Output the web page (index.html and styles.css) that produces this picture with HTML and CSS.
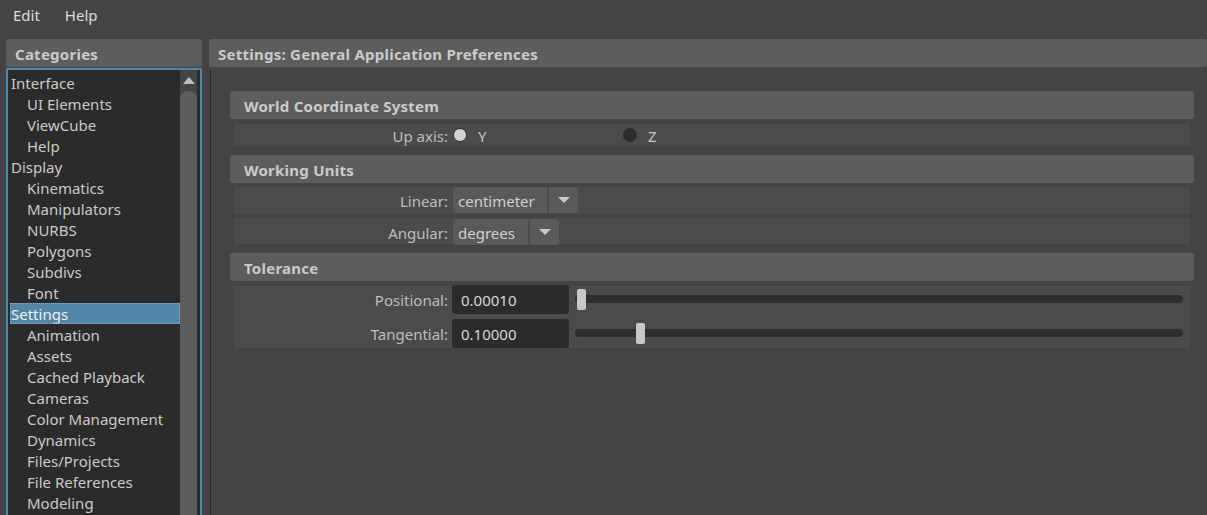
FILE: index.html
```html
<!DOCTYPE html>
<html>
<head>
<meta charset="utf-8">
<link rel="stylesheet" href="styles.css">
</head>
<body>
<div class="menubar"><span>Edit</span><span>Help</span></div>
<div class="main">
  <aside class="left">
    <div class="panel-title">Categories</div>
    <div class="listbox">
      <ul class="items">
        <li class="parent">Interface</li>
        <li>UI Elements</li>
        <li>ViewCube</li>
        <li>Help</li>
        <li class="parent">Display</li>
        <li>Kinematics</li>
        <li>Manipulators</li>
        <li>NURBS</li>
        <li>Polygons</li>
        <li>Subdivs</li>
        <li>Font</li>
        <li class="parent selected">Settings</li>
        <li>Animation</li>
        <li>Assets</li>
        <li>Cached Playback</li>
        <li>Cameras</li>
        <li>Color Management</li>
        <li>Dynamics</li>
        <li>Files/Projects</li>
        <li>File References</li>
        <li>Modeling</li>
      </ul>
      <div class="scrollbar"><div class="arrow"></div><div class="thumb"></div></div>
    </div>
  </aside>
  <section class="right">
    <div class="panel-title">Settings: General Application Preferences</div>
    <div class="content">
      <div class="group">
        <div class="group-title">World Coordinate System</div>
        <div class="block h22">
          <div class="row">
            <label>Up axis:</label>
            <div class="radios">
              <span class="opt"><span class="radio on"></span><span class="txt">Y</span></span>
              <span class="opt"><span class="radio"></span><span class="txt">Z</span></span>
            </div>
          </div>
        </div>
      </div>
      <div class="group">
        <div class="group-title">Working Units</div>
        <div class="block h27">
          <div class="row">
            <label>Linear:</label>
            <div class="dropdown w125"><span class="val">centimeter</span><span class="caret"></span></div>
          </div>
        </div>
        <div class="block h26">
          <div class="row">
            <label>Angular:</label>
            <div class="dropdown w106"><span class="val">degrees</span><span class="caret"></span></div>
          </div>
        </div>
      </div>
      <div class="group">
        <div class="group-title">Tolerance</div>
        <div class="block tol">
          <div class="row r29">
            <label>Positional:</label>
            <div class="field">0.00010</div>
            <div class="slider"><div class="track"></div><div class="handle" style="left:2px"></div></div>
          </div>
          <div class="row r30">
            <label>Tangential:</label>
            <div class="field">0.10000</div>
            <div class="slider"><div class="track"></div><div class="handle" style="left:61px"></div></div>
          </div>
        </div>
      </div>
    </div>
  </section>
</div>
</body>
</html>
```
FILE: styles.css
```css
* { box-sizing: border-box; }
html, body { margin: 0; padding: 0; }
body {
  background: #444444;
  color: #c8c8c8;
  font-family: "Noto Sans", "Open Sans", sans-serif;
  font-size: 15px;
  width: 1207px;
  height: 515px;
  overflow: hidden;
}
.menubar {
  height: 32px;
  display: flex;
  align-items: center;
  gap: 25px;
  padding: 0 13px 2px;
  color: #dcdcdc;
}
.main {
  margin-top: 7px;
  display: flex;
  height: 476px;
  padding-left: 6px;
  overflow: hidden;
}
.left {
  width: 196px;
  display: flex;
  flex-direction: column;
  gap: 1px;
  flex: none;
}
.panel-title {
  height: 28px;
  flex: none;
  background: #5d5d5d;
  border-radius: 2px;
  font-weight: 700;
  letter-spacing: 0.25px;
  color: #cacaca;
  padding: 2px 0 0 9px;
  display: flex;
  align-items: center;
}
.listbox {
  flex: 1;
  border: 2px solid #4f86ac;
  border-bottom: none;
  display: flex;
  background: #2b2b2b;
  min-height: 0;
}
.items {
  list-style: none;
  margin: 0;
  padding: 2px 0 0 2px;
  flex: 1;
  overflow: hidden;
}
.items li {
  height: 21px;
  line-height: 23px;
  padding-left: 17px;
  color: #cacaca;
  white-space: nowrap;
}
.items li.parent { padding-left: 1px; }
.items li.selected {
  background: #5285a6;
  color: #eeeeee;
  outline: 1px dotted #8fb0c6;
  outline-offset: -1px;
}
.scrollbar {
  width: 20px;
  flex: none;
  background: #444444;
  border-right: 3px solid #2b2b2b;
  display: flex;
  flex-direction: column;
  align-items: center;
}
.arrow {
  margin-top: 7px;
  width: 0; height: 0;
  border-left: 6.5px solid transparent;
  border-right: 6.5px solid transparent;
  border-bottom: 7px solid #bdbdbd;
}
.thumb {
  margin-top: 7px;
  flex: 1;
  width: 17px;
  background: #5d5d5d;
  border-radius: 8px 8px 0 0;
}
.right {
  flex: 1;
  margin-left: 7px;
  display: flex;
  flex-direction: column;
  min-width: 0;
}
.content {
  flex: 1;
  margin-top: 3px;
  margin-left: 1px;
  border-left: 1px solid #2b2b2b;
  padding: 21px 13px 0 19px;
  display: flex;
  flex-direction: column;
  gap: 9px;
}
.group { display: flex; flex-direction: column; gap: 4px; }
.group-title {
  height: 28px;
  background: #5d5d5d;
  border-radius: 2px;
  font-weight: 700;
  letter-spacing: 0.25px;
  color: #cacaca;
  padding: 2px 0 0 14px;
  display: flex;
  align-items: center;
}
.block {
  margin: 0 4px;
  background: #4b4b4b;
}
.group:first-child .block { margin-top: 1px; }
.h22 { height: 22px; }
.h27 { height: 27px; }
.h26 { height: 26px; }
.h27 .row { margin-top: -1px; }
.h26 .row { padding-top: 2px; }
.tol {
  height: 62px;
  display: flex;
  flex-direction: column;
  gap: 5px;
  margin-top: 1px;
}
.row {
  height: 100%;
  display: flex;
  align-items: center;
}
.r29 { height: 29px; margin-top: -1px; }
.r30 { height: 30px; }
.row label {
  width: 214px;
  flex: none;
  text-align: right;
  color: #bdbdbd;
  padding-top: 2px;
  margin-right: 5px;
}
.radios { display: flex; }
.opt {
  width: 170px;
  display: flex;
  align-items: center;
  color: #c8c8c8;
}
.opt .txt { padding-top: 2px; }
.radio {
  width: 14px;
  height: 14px;
  border-radius: 50%;
  background: #2b2b2b;
  border: 1px solid #2b2b2b;
  margin-right: 11px;
}
.radio.on { background: #d2d2d2; }
.dropdown {
  height: 26px;
  background: #5a5a5a;
  border-radius: 3px;
  display: flex;
  align-items: center;
  color: #d0d0d0;
}
.w125 { width: 125px; }
.w106 { width: 106px; }
.dropdown .val {
  flex: 1;
  padding: 2px 0 0 5px;
  height: 100%;
  display: flex;
  align-items: center;
  border-right: 2px solid #4b4b4b;
}
.dropdown .caret {
  width: 29px;
  display: flex;
  justify-content: center;
}
.dropdown .caret::before {
  content: "";
  width: 0; height: 0;
  border-left: 6.5px solid transparent;
  border-right: 6.5px solid transparent;
  border-top: 6px solid #c8c8c8;
}
.field {
  width: 117px;
  height: 100%;
  flex: none;
  background: #2b2b2b;
  border-radius: 3px;
  color: #d8d8d8;
  padding: 2px 0 0 9px;
  display: flex;
  align-items: center;
  margin-left: -1px;
}
.slider {
  flex: 1;
  position: relative;
  margin: 0 7px 0 6px;
  height: 21px;
}
.track {
  position: absolute;
  left: 0; right: 0;
  top: 6px;
  height: 8px;
  background: #2d2d2d;
  border-radius: 4px;
}
.handle {
  position: absolute;
  top: 0;
  width: 9px;
  height: 21px;
  background: #c8c8c8;
  border-radius: 2px;
}
```
